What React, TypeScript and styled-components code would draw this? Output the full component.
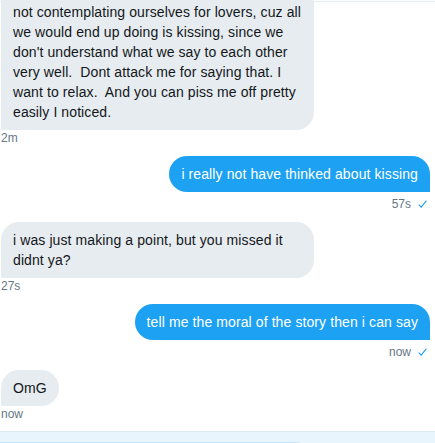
import React from "react";
import styled, { createGlobalStyle, css } from "styled-components";

type Side = "sent" | "received";

const Global = createGlobalStyle`
  html, body {
    margin: 0;
    padding: 0;
    height: 100%;
    background: #ffffff;
  }
  body {
    font-family: "Liberation Sans", Arial, Helvetica, sans-serif;
    overflow: hidden;
  }
  #root {
    height: 100%;
  }
`;

const Page = styled.div`
  position: relative;
  height: 100vh;
  display: flex;
  flex-direction: column;
  overflow: hidden;
  background: #ffffff;
`;

const HeaderEdge = styled.div`
  position: absolute;
  top: 1px;
  left: 0;
  right: 0;
  height: 1px;
  background: #e6ecf0;
  z-index: 1;
`;

const Messages = styled.div`
  flex: 1;
  min-height: 0;
  overflow: hidden;
  display: flex;
  flex-direction: column;
  justify-content: flex-end;
  padding: 0 5px 9px 1px;
`;

const Group = styled.div<{ $side: Side }>`
  display: flex;
  flex-direction: column;
  align-items: ${(p) => (p.$side === "sent" ? "flex-end" : "flex-start")};
  & + & {
    margin-top: 10px;
  }
`;

const Bubble = styled.div<{ $side: Side }>`
  box-sizing: border-box;
  max-width: 313px;
  padding: 8px 12px;
  font-size: 14px;
  line-height: 20px;
  letter-spacing: 0.1px;
  white-space: pre-wrap;
  overflow-wrap: break-word;
  ${(p) =>
    p.$side === "sent"
      ? css`
          background: #1da1f2;
          color: #ffffff;
          border-radius: 18px 18px 0 18px;
        `
      : css`
          background: #e6ecf0;
          color: #14171a;
          border-radius: 18px 18px 18px 0;
        `}
`;

const Meta = styled.div<{ $side: Side }>`
  display: flex;
  align-items: center;
  gap: 7px;
  font-size: 12px;
  line-height: 16px;
  color: #657786;
  margin-top: ${(p) => (p.$side === "sent" ? "4px" : "0")};
  padding-right: ${(p) => (p.$side === "sent" ? "3px" : "0")};
`;

const Check = styled.svg`
  display: block;
  width: 9px;
  height: 8px;
`;

const Composer = styled.div`
  flex: none;
  box-sizing: border-box;
  height: 12px;
  border-top: 1px solid #dde9f1;
  background: #e8f5fd;
  padding-top: 10px;
`;

const Input = styled.div`
  box-sizing: border-box;
  width: 312px;
  height: 34px;
  border: 1px solid #bfe3fa;
  border-left: none;
  border-radius: 0 17px 17px 0;
  background: #ffffff;
`;

type Msg = { side: Side; text: string; time: string };

const messages: Msg[] = [
  {
    side: "received",
    text:
      "i said it in the best possible. i guess we're all not contemplating ourselves for lovers, cuz all we would end up doing is kissing, since we don't understand what we say to each other very well.  Dont attack me for saying that. I want to relax.  And you can piss me off pretty easily I noticed.",
    time: "2m",
  },
  { side: "sent", text: "i really not have thinked about kissing", time: "57s" },
  {
    side: "received",
    text: "i was just making a point, but you missed it didnt ya?",
    time: "27s",
  },
  {
    side: "sent",
    text: "tell me the moral of the story then i can say",
    time: "now",
  },
  { side: "received", text: "OmG", time: "now" },
];

const CheckIcon = () => (
  <Check viewBox="0 0 9 8" aria-hidden="true">
    <path d="M0.8 4.6 L3.2 7.2 L8.4 0.6" fill="none" stroke="#1da1f2" strokeWidth="1.1" />
  </Check>
);

export default function App() {
  return (
    <Page>
      <Global />
      <HeaderEdge />
      <Messages>
        {messages.map((m, i) => (
          <Group key={i} $side={m.side}>
            <Bubble $side={m.side}>{m.text}</Bubble>
            <Meta $side={m.side}>
              <span>{m.time}</span>
              {m.side === "sent" && <CheckIcon />}
            </Meta>
          </Group>
        ))}
      </Messages>
      <Composer>
        <Input />
      </Composer>
    </Page>
  );
}
